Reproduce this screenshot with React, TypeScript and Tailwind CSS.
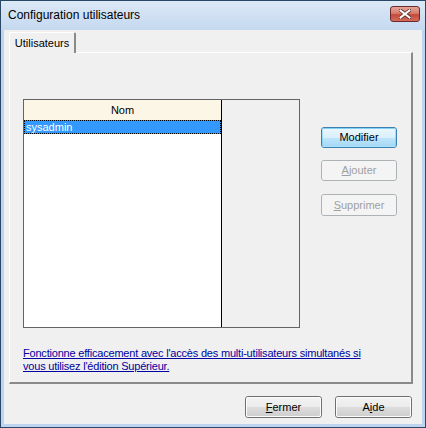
import React from "react";

const font = { fontFamily: '"Liberation Sans", Arial, sans-serif' };

function Btn({
  children,
  variant = "normal",
  className = "",
}: {
  children: React.ReactNode;
  variant?: "normal" | "default" | "disabled";
  className?: string;
}) {
  const outer =
    variant === "default"
      ? "border-[#3c7fb1]"
      : variant === "disabled"
      ? "border-[#adb2b5]"
      : "border-[#707070]";
  const inner =
    variant === "default"
      ? "bg-[linear-gradient(#eaf6fd_0%,#d9f0fc_50%,#bee6fd_51%,#a7d9f5_100%)] border-[#48c4f5]/40"
      : variant === "disabled"
      ? "bg-[#f4f4f4] border-[#f4f4f4]"
      : "bg-[linear-gradient(#f2f2f2_0%,#ebebeb_50%,#dddddd_51%,#cfcfcf_100%)] border-[#fcfcfc]";
  const text = variant === "disabled" ? "text-[#a0a0a0]" : "text-black";
  return (
    <div className={`rounded-[3px] border ${outer} ${className}`}>
      <div
        className={`w-full h-full rounded-[2px] border ${inner} ${text} flex items-center justify-center text-[11px] leading-none`}
      >
        {children}
      </div>
    </div>
  );
}

export default function App() {
  return (
    <div
      style={font}
      className="w-[426px] h-[428px] border border-[#2b4766] bg-[#bfd4ee] flex flex-col"
    >
      {/* Title bar */}
      <div className="h-[29px] shrink-0 bg-[linear-gradient(#dce9f7,#c4d8ef)] flex items-start relative">
        <span className="ml-[7px] mt-[6px] text-[12px] text-black leading-[16px]">
          Configuration utilisateurs
        </span>
        <div className="absolute left-[389px] top-[5px] w-[30px] h-[16px] rounded-[3px] border border-[#6d2a2a] bg-[linear-gradient(#e3a497_0%,#d77d6d_45%,#c4493a_55%,#d46c5a_100%)] flex items-center justify-center">
          <svg width="12" height="10" viewBox="0 0 12 10">
            <path
              d="M1.5 1.5 L10.5 8.5 M10.5 1.5 L1.5 8.5"
              stroke="#5a2a2a"
              strokeWidth="3.6"
              strokeLinecap="square"
            />
            <path
              d="M1.5 1.5 L10.5 8.5 M10.5 1.5 L1.5 8.5"
              stroke="#ffffff"
              strokeWidth="2"
              strokeLinecap="square"
            />
          </svg>
        </div>
      </div>

      {/* Content */}
      <div className="flex-1 mx-[3px] mb-[3px] bg-[#f0f0f0] flex flex-col">
        {/* Tab */}
        <div className="pl-[5px] pt-[2px] flex">
          <div className="h-[21px] w-[67px] border-t border-l border-white border-r-2 border-r-[#8a8a8a] rounded-t-[2px] bg-[#f0f0f0] flex items-center justify-center text-[11px] text-black relative z-10 -mb-px">
            Utilisateurs
          </div>
        </div>

        {/* Panel */}
        <div className="ml-[5px] w-[404px] h-[332px] border-t border-l border-white border-r-2 border-b-2 border-r-[#8a8a8a] border-b-[#8a8a8a] flex flex-col">
          <div className="flex pt-[46px] pl-[13px]">
            {/* List */}
            <div className="w-[277px] h-[229px] border border-[#646464] flex bg-[#f0f0f0]">
              <div className="w-[198px] border-r border-black bg-white flex flex-col">
                <div className="h-[20px] bg-[#fcf6e6] flex items-center justify-center text-[11px] text-black">
                  Nom
                </div>
                <div className="h-[14px] bg-[#3399ff] border border-dotted border-black flex items-center pl-[1px] text-[11px] text-white leading-none">
                  sysadmin
                </div>
              </div>
              <div className="flex-1" />
            </div>
            {/* Buttons */}
            <div className="ml-[21px] pt-[28px] flex flex-col">
              <Btn variant="default" className="w-[76px] h-[21px]">
                Modifier
              </Btn>
              <Btn variant="disabled" className="w-[76px] h-[21px] mt-[12px]">
                <span>
                  <u>A</u>jouter
                </span>
              </Btn>
              <Btn variant="disabled" className="w-[76px] h-[22px] mt-[13px]">
                <span>
                  <u>S</u>upprimer
                </span>
              </Btn>
            </div>
          </div>
          <div className="pl-[13px] pt-[19px] text-[11px] leading-[13px] tracking-[-0.2px] text-[#0000a0] underline">
            <div>Fonctionne efficacement avec l'accès des multi-utilisateurs simultanés si</div>
            <div>vous utilisez l'édition Supérieur.</div>
          </div>
        </div>

        {/* Bottom buttons */}
        <div className="flex pl-[241px] pt-[12px] gap-[13px]">
          <Btn className="w-[77px] h-[22px]">
            <span>
              <u>F</u>ermer
            </span>
          </Btn>
          <Btn className="w-[77px] h-[22px]">
            <span>
              A<u>i</u>de
            </span>
          </Btn>
        </div>
      </div>
    </div>
  );
}
